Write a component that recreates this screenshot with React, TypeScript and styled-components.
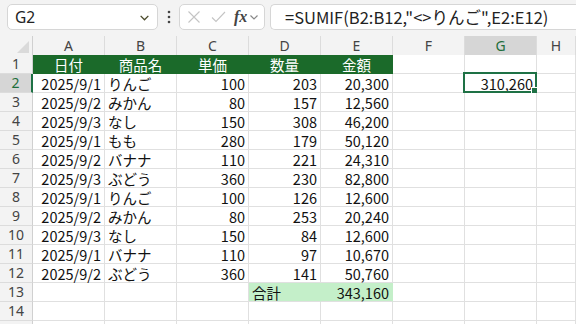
import React from "react";
import styled, { createGlobalStyle } from "styled-components";

const Global = createGlobalStyle`
  html, body { margin: 0; padding: 0; background: #ffffff; overflow: hidden; }
  body { font-family: "Noto Sans CJK JP", "Noto Sans", sans-serif; }
`;

const Page = styled.div`
  width: 576px;
  height: 324px;
  overflow: hidden;
  background: #f3f3f3;
`;

const Toolbar = styled.div`
  height: 36px;
  display: flex;
  align-items: flex-start;
  padding: 4px 0 0 7px;
  box-sizing: border-box;
`;

const Box = styled.div<{ $w?: number; $grow?: boolean }>`
  height: 26px;
  box-sizing: border-box;
  background: #ffffff;
  border: 1px solid #d6d6d6;
  border-radius: 5px;
  display: flex;
  align-items: center;
  ${(p) => (p.$w ? `width: ${p.$w}px; flex: none;` : "")}
  ${(p) => (p.$grow ? `flex: 1; border-right: none; border-radius: 5px 0 0 5px;` : "")}
`;

const NameText = styled.span`
  flex: 1;
  padding-left: 7px;
  font-size: 15.5px;
  line-height: 20px;
  color: #222;
  font-family: "Noto Sans", sans-serif;
`;

const Dots = styled.div`
  width: 21px;
  height: 26px;
  display: flex;
  align-items: center;
  justify-content: center;
`;

const FormulaText = styled.span`
  padding-left: 14px;
  font-size: 16.5px;
  line-height: 20px;
  color: #222;
  white-space: nowrap;
`;

const FxText = styled.span`
  font-family: "Liberation Serif", serif;
  font-style: italic;
  font-weight: bold;
  font-size: 16px;
  line-height: 20px;
  color: #444;
  margin-left: 8px;
`;

const Gap = styled.div<{ $w: number }>`
  width: ${(p) => p.$w}px;
  flex: none;
`;

const Sheet = styled.div`
  display: grid;
  grid-template-columns: 33px repeat(7, 72px) 1fr;
  grid-auto-rows: 19px;
  background: #ffffff;
`;

const ColHead = styled.div<{ $sel?: boolean }>`
  height: 21px;
  box-sizing: border-box;
  background: ${(p) => (p.$sel ? "#d6d6d6" : "#f3f3f3")};
  border-right: 1px solid #dcdcdc;
  border-bottom: ${(p) => (p.$sel ? "2px solid #1e7145" : "1px solid #d0d0d0")};
  display: flex;
  align-items: center;
  justify-content: center;
  font-size: 14px;
  line-height: 16px;
  color: ${(p) => (p.$sel ? "#1e6e3c" : "#444")};
  font-family: "Noto Sans", sans-serif;
  padding-top: ${(p) => (p.$sel ? "1px" : "0")};
`;

const GridRow = styled.div`
  display: contents;
`;

const Corner = styled.div`
  height: 21px;
  box-sizing: border-box;
  background: #f3f3f3;
  border-right: 1px solid #d0d0d0;
  border-bottom: 1px solid #d0d0d0;
  display: flex;
  align-items: flex-end;
  justify-content: flex-end;
  padding: 0 3px 3px 0;
`;

const RowHead = styled.div<{ $sel?: boolean }>`
  box-sizing: border-box;
  background: ${(p) => (p.$sel ? "#d6d6d6" : "#f3f3f3")};
  border-right: ${(p) => (p.$sel ? "2px solid #1e7145" : "1px solid #d0d0d0")};
  border-bottom: 1px solid #dcdcdc;
  display: flex;
  align-items: center;
  justify-content: center;
  font-size: 14px;
  line-height: 16px;
  color: ${(p) => (p.$sel ? "#1e6e3c" : "#444")};
  font-family: "Noto Sans", sans-serif;
`;

type Kind = "plain" | "head" | "total";

const Cell = styled.div<{ $kind: Kind; $align: "left" | "right" | "center" }>`
  position: relative;
  box-sizing: border-box;
  border-right: 1px solid
    ${(p) => (p.$kind === "head" ? "#1b6a2a" : p.$kind === "total" ? "#c4efc9" : "#e0e0e0")};
  border-bottom: 1px solid ${(p) => (p.$kind === "head" ? "#1b6a2a" : "#e0e0e0")};
  background: ${(p) =>
    p.$kind === "head" ? "#1b6a2a" : p.$kind === "total" ? "#c4efc9" : "#ffffff"};
  color: ${(p) => (p.$kind === "head" ? "#ffffff" : "#111")};
  font-size: 14.5px;
  line-height: 17px;
  padding: 0 3px;
  display: flex;
  align-items: center;
  justify-content: ${(p) =>
    p.$align === "left" ? "flex-start" : p.$align === "right" ? "flex-end" : "center"};
  white-space: nowrap;
`;

const Selection = styled.div`
  position: absolute;
  left: -2px;
  top: -2px;
  right: -1px;
  bottom: -1px;
  border: 2px solid #1e7145;
  pointer-events: none;
`;

const Handle = styled.div`
  position: absolute;
  right: -4px;
  bottom: -4px;
  width: 6px;
  height: 6px;
  background: #1e7145;
  border: 1px solid #ffffff;
`;

const Chevron = ({ color = "#555", size = 10 }: { color?: string; size?: number }) => (
  <svg width={size} height={size} viewBox="0 0 10 10">
    <path d="M1.5 3.5 L5 7 L8.5 3.5" fill="none" stroke={color} strokeWidth="1.2" />
  </svg>
);

type Row = (string | null)[];

const rows: Row[] = [
  ["日付", "商品名", "単価", "数量", "金額", null, null, null],
  ["2025/9/1", "りんご", "100", "203", "20,300", null, "310,260", null],
  ["2025/9/2", "みかん", "80", "157", "12,560", null, null, null],
  ["2025/9/3", "なし", "150", "308", "46,200", null, null, null],
  ["2025/9/1", "もも", "280", "179", "50,120", null, null, null],
  ["2025/9/2", "バナナ", "110", "221", "24,310", null, null, null],
  ["2025/9/3", "ぶどう", "360", "230", "82,800", null, null, null],
  ["2025/9/1", "りんご", "100", "126", "12,600", null, null, null],
  ["2025/9/2", "みかん", "80", "253", "20,240", null, null, null],
  ["2025/9/3", "なし", "150", "84", "12,600", null, null, null],
  ["2025/9/1", "バナナ", "110", "97", "10,670", null, null, null],
  ["2025/9/2", "ぶどう", "360", "141", "50,760", null, null, null],
  [null, null, null, "合計", "343,160", null, null, null],
  [null, null, null, null, null, null, null, null],
  [null, null, null, null, null, null, null, null],
];

const cols = ["A", "B", "C", "D", "E", "F", "G", "H"];

export default function App() {
  return (
    <Page>
      <Global />
      <Toolbar>
        <Box $w={151}>
          <NameText>G2</NameText>
          <Chevron color="#4a4a2a" size={11} />
          <Gap $w={7} />
        </Box>
        <Dots>
          <svg width="4" height="14" viewBox="0 0 4 14">
            <circle cx="2" cy="2" r="1.3" fill="#444" />
            <circle cx="2" cy="7" r="1.3" fill="#444" />
            <circle cx="2" cy="12" r="1.3" fill="#444" />
          </svg>
        </Dots>
        <Box $w={86}>
          <Gap $w={7} />
          <svg width="14" height="14" viewBox="0 0 14 14">
            <path d="M1.5 1.5 L12.5 12.5 M12.5 1.5 L1.5 12.5" stroke="#c4c4c4" strokeWidth="1.1" fill="none" />
          </svg>
          <Gap $w={10} />
          <svg width="15" height="14" viewBox="0 0 15 14">
            <path d="M1 7.5 L5 11.5 L14 2" stroke="#c4c4c4" strokeWidth="1.1" fill="none" />
          </svg>
          <FxText>fx</FxText>
          <Gap $w={2} />
          <Chevron color="#888" size={10} />
        </Box>
        <Gap $w={5} />
        <Box $grow>
          <FormulaText>=SUMIF(B2:B12,"&lt;&gt;りんご",E2:E12)</FormulaText>
        </Box>
      </Toolbar>
      <Sheet>
        <GridRow>
          <Corner>
            <svg width="12" height="12" viewBox="0 0 12 12">
              <path d="M12 0 L12 12 L0 12 Z" fill="#dadada" />
            </svg>
          </Corner>
          {cols.map((c) => (
            <ColHead key={c} $sel={c === "G"}>
              {c}
            </ColHead>
          ))}
        </GridRow>
        {rows.map((r, ri) => (
          <GridRow key={ri}>
            <RowHead $sel={ri === 1}>{ri < 14 ? ri + 1 : ""}</RowHead>
            {r.map((v, ci) => {
              const kind: Kind =
                ri === 0 && ci < 5 ? "head" : ri === 12 && (ci === 3 || ci === 4) ? "total" : "plain";
              const align =
                kind === "head" ? "center" : ci === 1 || (ri === 12 && ci === 3) ? "left" : "right";
              const selected = ri === 1 && ci === 6;
              return (
                <Cell key={ci} $kind={kind} $align={align}>
                  {v}
                  {selected && (
                    <Selection>
                      <Handle />
                    </Selection>
                  )}
                </Cell>
              );
            })}
          </GridRow>
        ))}
      </Sheet>
    </Page>
  );
}
